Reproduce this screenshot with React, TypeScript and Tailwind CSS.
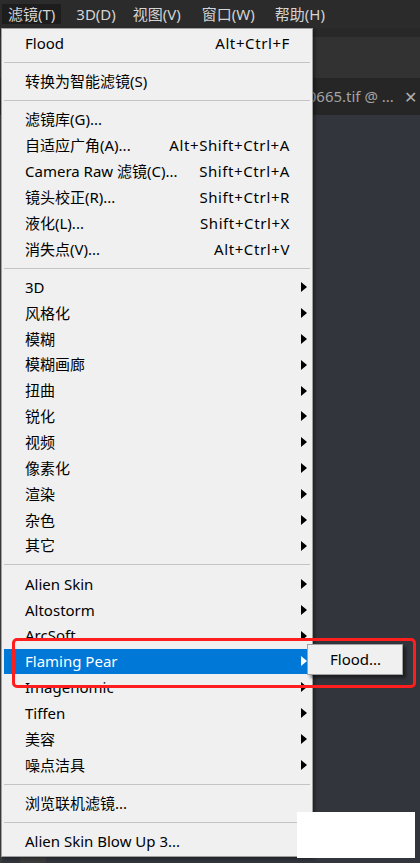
import React from "react";

type Item =
  | { kind: "item"; label: string; shortcut?: string; sub?: boolean; active?: boolean }
  | { kind: "sep" };

const FONT = { fontFamily: '"Noto Sans", "Noto Sans CJK SC", sans-serif' };

const MENU: Item[] = [
  { kind: "item", label: "Flood", shortcut: "Alt+Ctrl+F" },
  { kind: "sep" },
  { kind: "item", label: "转换为智能滤镜(S)" },
  { kind: "sep" },
  { kind: "item", label: "滤镜库(G)..." },
  { kind: "item", label: "自适应广角(A)...", shortcut: "Alt+Shift+Ctrl+A" },
  { kind: "item", label: "Camera Raw 滤镜(C)...", shortcut: "Shift+Ctrl+A" },
  { kind: "item", label: "镜头校正(R)...", shortcut: "Shift+Ctrl+R" },
  { kind: "item", label: "液化(L)...", shortcut: "Shift+Ctrl+X" },
  { kind: "item", label: "消失点(V)...", shortcut: "Alt+Ctrl+V" },
  { kind: "sep" },
  { kind: "item", label: "3D", sub: true },
  { kind: "item", label: "风格化", sub: true },
  { kind: "item", label: "模糊", sub: true },
  { kind: "item", label: "模糊画廊", sub: true },
  { kind: "item", label: "扭曲", sub: true },
  { kind: "item", label: "锐化", sub: true },
  { kind: "item", label: "视频", sub: true },
  { kind: "item", label: "像素化", sub: true },
  { kind: "item", label: "渲染", sub: true },
  { kind: "item", label: "杂色", sub: true },
  { kind: "item", label: "其它", sub: true },
  { kind: "sep" },
  { kind: "item", label: "Alien Skin", sub: true },
  { kind: "item", label: "Altostorm", sub: true },
  { kind: "item", label: "ArcSoft", sub: true },
  { kind: "item", label: "Flaming Pear", sub: true, active: true },
  { kind: "item", label: "Imagenomic", sub: true },
  { kind: "item", label: "Tiffen", sub: true },
  { kind: "item", label: "美容", sub: true },
  { kind: "item", label: "噪点洁具", sub: true },
  { kind: "sep" },
  { kind: "item", label: "浏览联机滤镜..." },
  { kind: "sep" },
  { kind: "item", label: "Alien Skin Blow Up 3..." },
];

// menubar labels with the gap to the next one
const BAR: [string, string][] = [
  ["滤镜(T)", "mr-[9px] bg-[#1d1d1d]"],
  ["3D(D)", "mr-[5px]"],
  ["视图(V)", "mr-[9px]"],
  ["窗口(W)", "mr-[8px]"],
  ["帮助(H)", ""],
];

function Arrow({ white }: Readonly<{ white?: boolean }>) {
  return (
    <svg width="6" height="10" viewBox="0 0 6 10" className="block">
      <path d="M0 0 L6 5 L0 10 Z" fill={white ? "#ffffff" : "#000000"} />
    </svg>
  );
}

function MenuRow({ item }: Readonly<{ item: Item }>) {
  if (item.kind === "sep") {
    return (
      <div className="flex h-[12.5px] items-center px-[2px]">
        <div className="h-px w-full bg-[#c4c4c4]" />
      </div>
    );
  }
  return (
    <div
      className={`mx-[2px] flex h-[25.85px] items-center pl-[21px] text-[15px] ${
        item.active ? "bg-[#0078d7] text-white" : "text-black"
      }`}
    >
      <span className="flex-1 whitespace-nowrap">{item.label}</span>
      {item.shortcut && (
        <span className="whitespace-nowrap tracking-[0.6px]">{item.shortcut}</span>
      )}
      <span className="flex w-[20px] shrink-0 justify-end pr-[3px]">
        {item.sub && <Arrow white={item.active} />}
      </span>
    </div>
  );
}

export default function App() {
  return (
    <div className="relative flex h-[863px] w-[420px] flex-col overflow-hidden bg-[#32353c]" style={FONT}>
      {/* menubar */}
      <div className="flex h-[28px] items-center bg-[#2b2b2b] pl-[2px] text-[15px] text-[#d4d4d4]">
        {BAR.map(([b, cls]) => (
          <span key={b} className={`flex h-[20px] items-center px-[6px] ${cls}`}>
            {b}
          </span>
        ))}
      </div>
      <div className="h-[9px] bg-[#282828]" />
      <div className="h-[41px] bg-[#323232]" />
      <div className="flex h-[37px] items-center bg-[#262626] pl-[282px] text-[15px] text-[#a3a3a3]">
        <span className="flex-1 whitespace-nowrap">2070665.tif @ ...</span>
        <span className="pr-[3px] text-[16px] text-[#b0b0b0]">✕</span>
      </div>
      <div className="flex flex-1">
        <div className="w-[2px] bg-[#3a3a3a]" />
        <div className="flex flex-1 items-end pl-[18px]">
          <div className="h-[10px] w-[26px] bg-[#3c3c3c]" />
        </div>
      </div>

      {/* dropdown menu */}
      <div className="absolute left-[1px] top-[28px] w-[312px] border border-[#a0a0a0] bg-[#f0f0f0] pt-[1px] pb-[2px] shadow-[2px_2px_3px_rgba(0,0,0,0.35)]">
        {MENU.map((m, i) => (
          <MenuRow key={i} item={m} />
        ))}
      </div>

      {/* submenu */}
      <div className="absolute left-[307px] top-[644px] flex h-[31px] w-[96px] items-center border border-[#a0a0a0] bg-[#f0f0f0] pl-[22px] text-[15px] text-black shadow-[3px_3px_3px_rgba(0,0,0,0.45)]">
        Flood...
      </div>

      {/* annotation */}
      <div className="absolute left-[12px] top-[638px] h-[50px] w-[404px] rounded-[5px] border-[3px] border-[#ff1e1e]" />

      {/* redaction */}
      <div className="absolute left-[297px] top-[812px] h-[46px] w-[118px] bg-white" />
    </div>
  );
}
